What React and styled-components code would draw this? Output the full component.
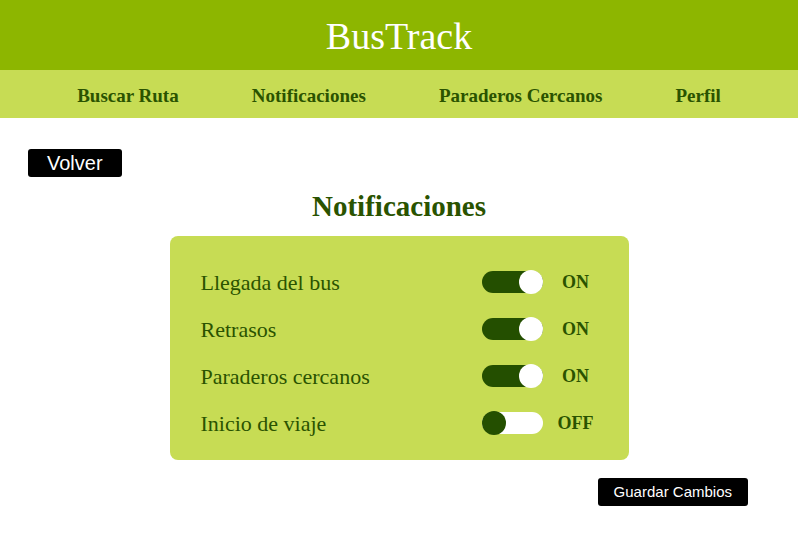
import React from "react";
import styled, { createGlobalStyle } from "styled-components";

const GlobalStyle = createGlobalStyle`
  body {
    margin: 0;
    background: #ffffff;
    font-family: "Liberation Serif", "Times New Roman", serif;
  }
`;

const DARK = "#2a5300";
const LIME = "#c7dc54";

const Header = styled.header`
  height: 70px;
  background: #8db600;
  display: flex;
  align-items: center;
  justify-content: center;
`;

const Brand = styled.h1`
  margin: 0;
  color: #ffffff;
  font-size: 38px;
  font-weight: 400;
  line-height: 1;
  padding-top: 2px;
`;

const Nav = styled.nav`
  height: 48px;
  background: ${LIME};
  display: flex;
  align-items: center;
  justify-content: space-evenly;
  padding: 0 4px;
`;

const NavLink = styled.a`
  color: ${DARK};
  font-size: 19px;
  font-weight: 700;
  text-decoration: none;
  cursor: pointer;
  padding-top: 3px;
`;

const Main = styled.main`
  padding: 31px 28px 0;
`;

const BlackButton = styled.button`
  background: #000000;
  color: #ffffff;
  border: none;
  border-radius: 3px;
  height: 28px;
  font-family: "Liberation Sans", Arial, sans-serif;
  font-size: ${(p) => p.$size}px;
  padding: 0 ${(p) => p.$pad}px;
  cursor: pointer;
  line-height: 28px;
`;

const Title = styled.h2`
  margin: 11px 0 0;
  text-align: center;
  color: ${DARK};
  font-size: 29px;
  font-weight: 700;
  line-height: 36px;
`;

const Card = styled.section`
  width: 459px;
  margin: 12px auto 0;
  box-sizing: border-box;
  background: ${LIME};
  border-radius: 8px;
  padding: 22px 31px 14px;
`;

const Row = styled.div`
  height: 47px;
  display: grid;
  grid-template-columns: 1fr 61px 44px;
  column-gap: 11px;
  align-items: center;
`;

const Label = styled.span`
  color: ${DARK};
  font-size: 22px;
  padding-top: 2px;
`;

const Track = styled.button`
  width: 61px;
  height: 22px;
  border: none;
  padding: 0;
  border-radius: 11px;
  background: ${(p) => (p.$on ? "#244f00" : "#ffffff")};
  display: flex;
  align-items: center;
  justify-content: ${(p) => (p.$on ? "flex-end" : "flex-start")};
  cursor: pointer;
`;

const Knob = styled.span`
  width: 24px;
  height: 24px;
  border-radius: 50%;
  background: ${(p) => (p.$on ? "#ffffff" : "#244f00")};
`;

const State = styled.span`
  color: ${DARK};
  font-size: 18px;
  font-weight: 700;
  text-align: center;
  padding-top: 2px;
`;

const Footer = styled.div`
  display: flex;
  justify-content: flex-end;
  padding: 18px 50px 0 0;
`;

const items = [
  { id: "bus", label: "Llegada del bus", on: true },
  { id: "delay", label: "Retrasos", on: true },
  { id: "near", label: "Paraderos cercanos", on: true },
  { id: "start", label: "Inicio de viaje", on: false },
];

const App = () => {
  const [prefs, setPrefs] = React.useState(items);

  const toggle = (id) =>
    setPrefs((list) =>
      list.map((item) => (item.id === id ? { ...item, on: !item.on } : item))
    );

  return (
    <>
      <GlobalStyle />
      <Header>
        <Brand>BusTrack</Brand>
      </Header>
      <Nav>
        <NavLink>Buscar Ruta</NavLink>
        <NavLink>Notificaciones</NavLink>
        <NavLink>Paraderos Cercanos</NavLink>
        <NavLink>Perfil</NavLink>
      </Nav>
      <Main>
        <BlackButton $size={20} $pad={19}>Volver</BlackButton>
      </Main>
      <Title>Notificaciones</Title>
      <Card>
        {prefs.map((item) => (
          <Row key={item.id}>
            <Label>{item.label}</Label>
            <Track $on={item.on} onClick={() => toggle(item.id)}>
              <Knob $on={item.on} />
            </Track>
            <State>{item.on ? "ON" : "OFF"}</State>
          </Row>
        ))}
      </Card>
      <Footer>
        <BlackButton $size={15} $pad={16}>Guardar Cambios</BlackButton>
      </Footer>
    </>
  );
};

export default App;
